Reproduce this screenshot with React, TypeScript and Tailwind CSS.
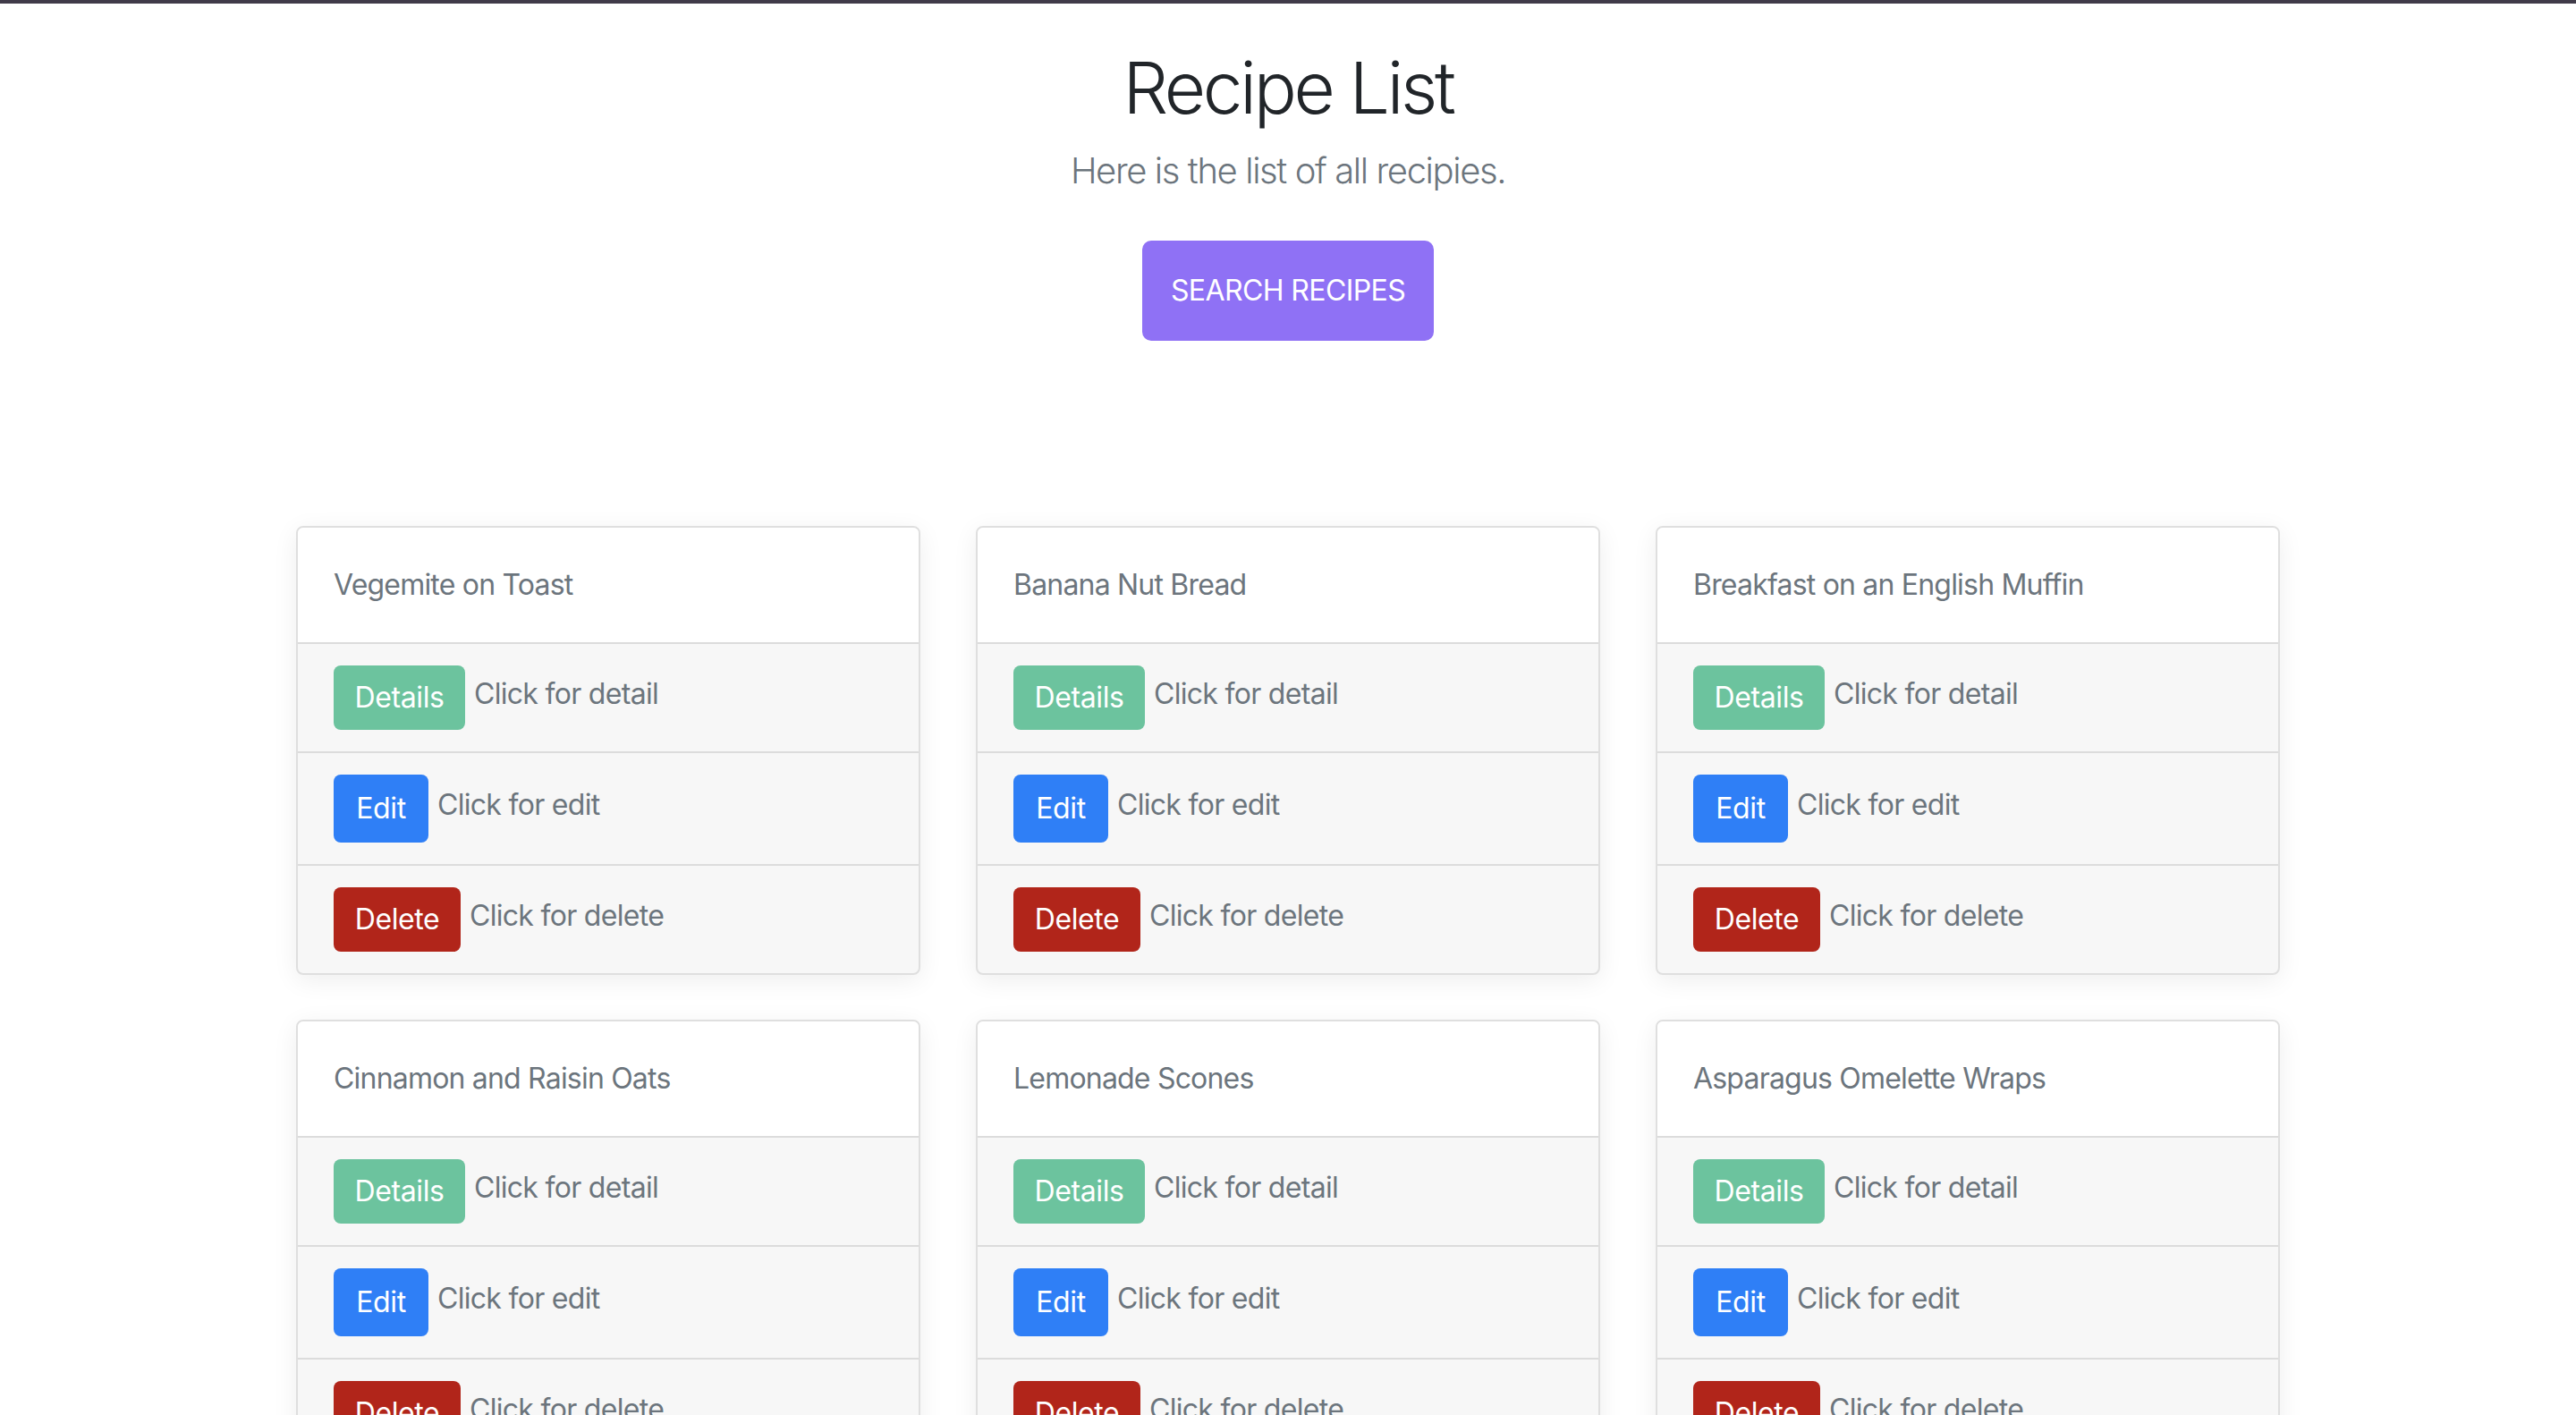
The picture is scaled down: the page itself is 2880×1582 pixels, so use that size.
import React from "react";

interface Recipe {
  id: number;
  title: string;
}

const recipes: Recipe[] = [
  { id: 1, title: "Vegemite on Toast" },
  { id: 2, title: "Banana Nut Bread" },
  { id: 3, title: "Breakfast on an English Muffin" },
  { id: 4, title: "Cinnamon and Raisin Oats" },
  { id: 5, title: "Lemonade Scones" },
  { id: 6, title: "Asparagus Omelette Wraps" },
];

const RecipeCard: React.FC<{ recipe: Recipe }> = ({ recipe }) => {
  return (
    <div className="overflow-hidden rounded-lg border-2 border-[#dfdfdf] bg-[#f7f7f7] shadow-[0_6px_28px_rgba(0,0,0,0.07)]">
      {/* Card header */}
      <div className="border-b-2 border-[#dcdcdc] bg-white px-[40px] py-[40px] text-[32px] leading-[48px] tracking-[-0.8px] text-[#6c757d]">
        {recipe.title}
      </div>

      {/* Details */}
      <div className="flex items-center border-b-2 border-[#dcdcdc] px-[40px] py-[24px]">
        <button className="h-[72px] w-[147px] rounded-lg bg-[#6cc39e] text-[32px] leading-[48px] tracking-[-0.4px] text-white">
          Details
        </button>
        <span className="mb-[8px] ml-[10px] text-[32px] leading-[48px] tracking-[-0.7px] text-[#6c757d]">
          Click for detail
        </span>
      </div>

      {/* Edit */}
      <div className="flex items-center border-b-2 border-[#dcdcdc] px-[40px] py-[24px]">
        <button className="h-[76px] w-[106px] rounded-lg bg-[#2f7ff6] text-[32px] leading-[48px] tracking-[-0.4px] text-white">
          Edit
        </button>
        <span className="mb-[8px] ml-[10px] text-[32px] leading-[48px] tracking-[-0.7px] text-[#6c757d]">
          Click for edit
        </span>
      </div>

      {/* Delete */}
      <div className="flex items-center px-[40px] py-[24px]">
        <button className="h-[72px] w-[142px] rounded-lg bg-[#b1251a] text-[32px] leading-[48px] tracking-[-0.4px] text-white">
          Delete
        </button>
        <span className="mb-[8px] ml-[10px] text-[32px] leading-[48px] tracking-[-0.7px] text-[#6c757d]">
          Click for delete
        </span>
      </div>
    </div>
  );
};

const App: React.FC = () => {
  return (
    <div className="min-h-screen bg-white font-['Inter','Noto_Sans',sans-serif]">
      <div className="h-[4px] bg-[#403b49]" />

      {/* Hero */}
      <section className="flex flex-col items-center pt-[46px] text-center">
        <h1 className="mb-[15px] text-[80px] font-light leading-[96px] tracking-[-3.3px] text-[#212529]">
          Recipe List
        </h1>
        <p className="text-[40px] font-light leading-[60px] tracking-[-1.4px] text-[#6c757d]">
          Here is the list of all recipies.
        </p>
        <button className="mt-[48px] rounded-[10px] bg-[#8f71f5] px-[32px] py-[32px] text-[32px] leading-[48px] tracking-[-0.6px] text-white">
          SEARCH RECIPES
        </button>
      </section>

      {/* Cards */}
      <div className="mx-auto mt-[207px] grid w-[2218px] grid-cols-3 gap-x-[62px] gap-y-[50px] pb-[80px]">
        {recipes.map((recipe) => (
          <RecipeCard key={recipe.id} recipe={recipe} />
        ))}
      </div>
    </div>
  );
};

export default App;
